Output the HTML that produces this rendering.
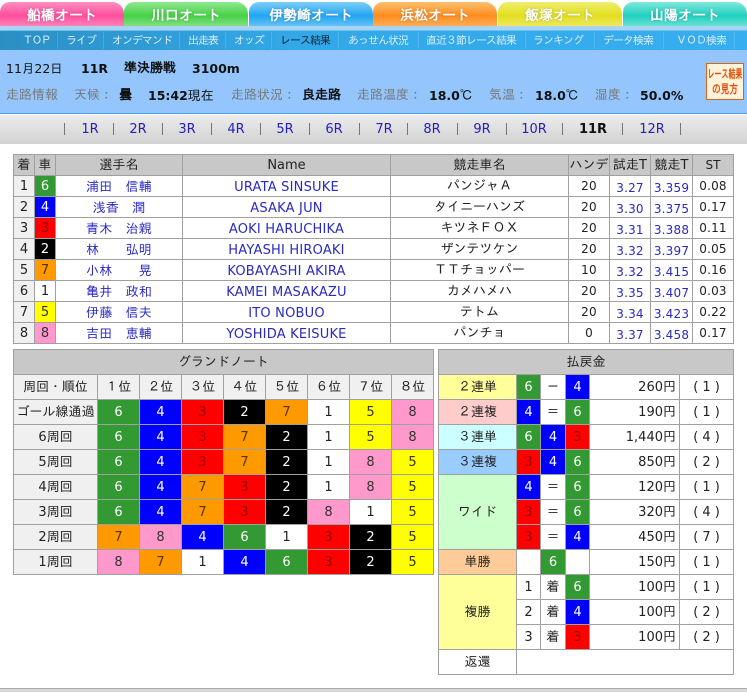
<!DOCTYPE html>
<html lang="ja"><head><meta charset="utf-8"><title>レース結果</title>
<style>
*{box-sizing:border-box}
html,body{margin:0;padding:0;background:#fff}
body{width:747px;height:692px;position:relative;overflow:hidden;font-family:"DejaVu Sans","IPAGothic","Noto Sans CJK JP",sans-serif;font-size:13px;color:#222}
.a{position:absolute;white-space:nowrap}
.tab{position:absolute;top:2px;height:25px;width:124px;border-radius:10px 12px 0 0;text-align:center;color:#fff;font-weight:bold;font-size:14px;line-height:28px;text-shadow:0 0 2px rgba(0,0,0,.25)}
#nav{position:absolute;left:0;top:30px;width:747px;height:20px;background:linear-gradient(90deg,#2c8fc4,#33a8e8 40%,#36aef0);border-top:1px solid #6fc0ee}
#nav span{position:absolute;top:2px;transform:translateX(-50%);font-size:11px;line-height:16px;color:#d8eefc;white-space:nowrap;letter-spacing:-1px}
#nav i{position:absolute;top:1px;width:1px;height:17px;background:rgba(255,255,255,.14)}
#info{position:absolute;left:0;top:50px;width:747px;height:64px;background:#94c6fd;border-bottom:1px solid #4d9be6}
#bar{position:absolute;left:0;top:115px;width:747px;height:29px;background:linear-gradient(#ececec,#d2d2d2)}
#bar span{position:absolute;top:7px;transform:translateX(-50%);font-size:13px;line-height:16px;color:#2222bb}
#bar i{position:absolute;top:8px;width:1px;height:12px;background:#777}
table{position:absolute;border-collapse:collapse;table-layout:fixed;font-size:13px}
td,th{border:1px solid #a0a0a0;padding:0;text-align:center;font-weight:normal;overflow:hidden;white-space:nowrap}
th{background:#c8c8c8}
.g{background:#f0f0f0}
.b{color:#2a2ac0;padding-top:3px;letter-spacing:.2px}
.n{font-size:12px;letter-spacing:.2px}
.c1{background:#fff;color:#222}.c2{background:#000;color:#fff}.c3{background:#f00;color:#900}.c4{background:#00f;color:#fff}.c5{background:#ff0;color:#333}.c6{background:#393;color:#fff}.c7{background:#f90;color:#553300}.c8{background:#f9c;color:#333}
#t1 tr{height:21px}
#t2 tr,#t3 tr{height:25px}
.r{text-align:right;padding-right:3px}
.d{font-family:"IPAGothic",sans-serif;font-weight:normal}
.l1{top:61px;font-size:12.5px;color:#111}
.l2{top:88px;color:#777}
.k{color:#111;font-weight:bold;font-size:12.5px}
.sq{display:block;transform-origin:center}
</style></head><body>
<div class="tab" style="left:0;background:linear-gradient(#ff8fc0,#ff4f9e 55%,#ff86bb)">船橋オート</div>
<div class="tab" style="left:124px;background:linear-gradient(#8fe88f,#46d246 55%,#88e088)">川口オート</div>
<div class="tab" style="left:249px;background:linear-gradient(#7fcdf8,#22a6f2 55%,#6cc4f6)">伊勢崎オート</div>
<div class="tab" style="left:373px;background:linear-gradient(#ffc070,#ff8c1e 55%,#ffb060)">浜松オート</div>
<div class="tab" style="left:498px;background:linear-gradient(#f0ee70,#e2de1e 55%,#eeea66)">飯塚オート</div>
<div class="tab" style="left:623px;background:linear-gradient(#80e8dc,#1fd0c0 55%,#70e2d6)">山陽オート</div>
<div class="a" style="left:0;top:26px;width:747px;height:4px;background:#a8d4f4"></div>
<div id="nav">
<i style="left:57px"></i><i style="left:103px"></i><i style="left:179px"></i><i style="left:225px"></i><i style="left:271px"></i><i style="left:338px"></i><i style="left:418px"></i><i style="left:525px"></i><i style="left:594px"></i><i style="left:663px"></i><i style="left:734px"></i>
<span style="left:36px;letter-spacing:-2px">ＴＯＰ</span><span style="left:81px">ライブ</span><span style="left:142px">オンデマンド</span><span style="left:203px">出走表</span><span style="left:249px">オッズ</span><span style="left:305px;color:#112233">レース結果</span><span style="left:378px">あっせん状況</span><span style="left:471px">直近３節レース結果</span><span style="left:558px">ランキング</span><span style="left:628px">データ検索</span><span style="left:701px">ＶＯＤ検索</span></div>
<div id="info"></div>
<div class="a l1" style="left:6px">11月22日</div>
<div class="a l1" style="left:81px;font-weight:bold">11R</div>
<div class="a l1" style="left:124px;font-weight:bold;font-size:13px">準決勝戦</div>
<div class="a l1" style="left:192px;font-weight:bold">3100m</div>
<div class="a l2" style="left:6px">走路情報</div>
<div class="a l2" style="left:74px">天候：</div>
<div class="a l2 k" style="left:119px;font-size:13px">曇</div>
<div class="a l2" style="left:148px;color:#111"><b style="font-size:12.5px">15:42</b>現在</div>
<div class="a l2" style="left:231px">走路状況：</div>
<div class="a l2 k" style="left:302px;font-size:13px">良走路</div>
<div class="a l2" style="left:357px">走路温度：</div>
<div class="a l2 k" style="left:429px">18.0<span class="d" style="font-size:13px">℃</span></div>
<div class="a l2" style="left:489px">気温：</div>
<div class="a l2 k" style="left:535px">18.0<span class="d" style="font-size:13px">℃</span></div>
<div class="a l2" style="left:595px">湿度：</div>
<div class="a l2 k" style="left:640px">50.0%</div>
<div class="a" style="left:706px;top:63px;width:38px;height:37px;background:#fff3dc;border:1px solid #d8641a;color:#e0500a;font-weight:bold;font-size:12px;line-height:15px;text-align:center;padding-top:3px;overflow:hidden">
<span class="sq" style="width:60px;margin-left:-12px;transform:scaleX(.58)">レース結果</span><span class="sq" style="transform:scaleX(.72);font-size:12px">の見方</span></div>
<div id="bar">
<i style="left:64px"></i><span style="left:90px">1R</span><i style="left:113px"></i><span style="left:138px">2R</span><i style="left:162px"></i><span style="left:187px">3R</span><i style="left:211px"></i><span style="left:236px">4R</span><i style="left:260px"></i><span style="left:285px">5R</span><i style="left:309px"></i><span style="left:334px">6R</span><i style="left:359px"></i><span style="left:384px">7R</span><i style="left:407px"></i><span style="left:432px">8R</span><i style="left:457px"></i><span style="left:482px">9R</span><i style="left:506px"></i><span style="left:534px">10R</span><i style="left:562px"></i><span style="left:593px;font-weight:bold;color:#111">11R</span><i style="left:622px"></i><span style="left:652px">12R</span><i style="left:680px"></i>
</div>

<table id="t1" style="left:13px;top:154px;width:720px">
<colgroup><col style="width:21px"><col style="width:21px"><col style="width:127px"><col style="width:208px"><col style="width:178px"><col style="width:41px"><col style="width:41px"><col style="width:42px"><col style="width:41px"></colgroup>
<tr><th>着</th><th>車</th><th>選手名</th><th>Name</th><th>競走車名</th><th>ハンデ</th><th>試走T</th><th>競走T</th><th style="font-size:12px">ST</th></tr>
<tr><td class="g">1</td><td class="c6">6</td><td class="b">浦田　信輔</td><td class="b">URATA SINSUKE</td><td>パンジャＡ</td><td class="n">20</td><td class="b n">3.27</td><td class="b n">3.359</td><td class="n">0.08</td></tr>
<tr><td class="g">2</td><td class="c4">4</td><td class="b">浅香　潤</td><td class="b">ASAKA JUN</td><td>タイニーハンズ</td><td class="n">20</td><td class="b n">3.30</td><td class="b n">3.375</td><td class="n">0.17</td></tr>
<tr><td class="g">3</td><td class="c3">3</td><td class="b">青木　治親</td><td class="b">AOKI HARUCHIKA</td><td>キツネＦＯＸ</td><td class="n">20</td><td class="b n">3.31</td><td class="b n">3.388</td><td class="n">0.11</td></tr>
<tr><td class="g">4</td><td class="c2">2</td><td class="b">林　　弘明</td><td class="b">HAYASHI HIROAKI</td><td>ザンテツケン</td><td class="n">20</td><td class="b n">3.32</td><td class="b n">3.397</td><td class="n">0.05</td></tr>
<tr><td class="g">5</td><td class="c7">7</td><td class="b">小林　　晃</td><td class="b">KOBAYASHI AKIRA</td><td>ＴＴチョッパー</td><td class="n">10</td><td class="b n">3.32</td><td class="b n">3.415</td><td class="n">0.16</td></tr>
<tr><td class="g">6</td><td class="c1">1</td><td class="b">亀井　政和</td><td class="b">KAMEI MASAKAZU</td><td>カメハメハ</td><td class="n">20</td><td class="b n">3.35</td><td class="b n">3.407</td><td class="n">0.03</td></tr>
<tr><td class="g">7</td><td class="c5">5</td><td class="b">伊藤　信夫</td><td class="b">ITO NOBUO</td><td>テトム</td><td class="n">20</td><td class="b n">3.34</td><td class="b n">3.423</td><td class="n">0.22</td></tr>
<tr><td class="g">8</td><td class="c8">8</td><td class="b">吉田　恵輔</td><td class="b">YOSHIDA KEISUKE</td><td>パンチョ</td><td class="n">0</td><td class="b n">3.37</td><td class="b n">3.458</td><td class="n">0.17</td></tr>
</table>

<table id="t2" style="left:13px;top:349px;width:420px">
<colgroup><col style="width:84px"><col style="width:42px"><col style="width:42px"><col style="width:42px"><col style="width:42px"><col style="width:42px"><col style="width:42px"><col style="width:42px"><col style="width:42px"></colgroup>
<tr><th colspan="9">グランドノート</th></tr>
<tr><td class="g">周回・順位</td><td class="g">１位</td><td class="g">２位</td><td class="g">３位</td><td class="g">４位</td><td class="g">５位</td><td class="g">６位</td><td class="g">７位</td><td class="g">８位</td></tr>
<tr><td class="g">ゴール線通過</td><td class="c6">6</td><td class="c4">4</td><td class="c3">3</td><td class="c2">2</td><td class="c7">7</td><td class="c1">1</td><td class="c5">5</td><td class="c8">8</td></tr>
<tr><td class="g">6周回</td><td class="c6">6</td><td class="c4">4</td><td class="c3">3</td><td class="c7">7</td><td class="c2">2</td><td class="c1">1</td><td class="c5">5</td><td class="c8">8</td></tr>
<tr><td class="g">5周回</td><td class="c6">6</td><td class="c4">4</td><td class="c3">3</td><td class="c7">7</td><td class="c2">2</td><td class="c1">1</td><td class="c8">8</td><td class="c5">5</td></tr>
<tr><td class="g">4周回</td><td class="c6">6</td><td class="c4">4</td><td class="c7">7</td><td class="c3">3</td><td class="c2">2</td><td class="c1">1</td><td class="c8">8</td><td class="c5">5</td></tr>
<tr><td class="g">3周回</td><td class="c6">6</td><td class="c4">4</td><td class="c7">7</td><td class="c3">3</td><td class="c2">2</td><td class="c8">8</td><td class="c1">1</td><td class="c5">5</td></tr>
<tr><td class="g">2周回</td><td class="c7">7</td><td class="c8">8</td><td class="c4">4</td><td class="c6">6</td><td class="c1">1</td><td class="c3">3</td><td class="c2">2</td><td class="c5">5</td></tr>
<tr><td class="g">1周回</td><td class="c8">8</td><td class="c7">7</td><td class="c1">1</td><td class="c4">4</td><td class="c6">6</td><td class="c3">3</td><td class="c2">2</td><td class="c5">5</td></tr>
</table>

<table id="t3" style="left:438px;top:349px;width:295px">
<colgroup><col style="width:78px"><col style="width:24px"><col style="width:25px"><col style="width:24px"><col style="width:90px"><col style="width:54px"></colgroup>
<tr><th colspan="6">払戻金</th></tr>
<tr><td style="background:#ffff99">２連単</td><td class="c6">6</td><td>－</td><td class="c4">4</td><td class="r">260円</td><td>( 1 )</td></tr>
<tr><td style="background:#ffcccc">２連複</td><td class="c4">4</td><td>＝</td><td class="c6">6</td><td class="r">190円</td><td>( 1 )</td></tr>
<tr><td style="background:#ccffff">３連単</td><td class="c6">6</td><td class="c4">4</td><td class="c3">3</td><td class="r">1,440円</td><td>( 4 )</td></tr>
<tr><td style="background:#99ccff">３連複</td><td class="c3">3</td><td class="c4">4</td><td class="c6">6</td><td class="r">850円</td><td>( 2 )</td></tr>
<tr><td rowspan="3" style="background:#ccffcc">ワイド</td><td class="c4">4</td><td>＝</td><td class="c6">6</td><td class="r">120円</td><td>( 1 )</td></tr>
<tr><td class="c3">3</td><td>＝</td><td class="c6">6</td><td class="r">320円</td><td>( 4 )</td></tr>
<tr><td class="c3">3</td><td>＝</td><td class="c4">4</td><td class="r">450円</td><td>( 7 )</td></tr>
<tr><td style="background:#ffcc99">単勝</td><td></td><td class="c6">6</td><td></td><td class="r">150円</td><td>( 1 )</td></tr>
<tr><td rowspan="3" style="background:#ffff99">複勝</td><td>1</td><td>着</td><td class="c6">6</td><td class="r">100円</td><td>( 1 )</td></tr>
<tr><td>2</td><td>着</td><td class="c4">4</td><td class="r">100円</td><td>( 2 )</td></tr>
<tr><td>3</td><td>着</td><td class="c3">3</td><td class="r">100円</td><td>( 2 )</td></tr>
<tr><td>返還</td><td colspan="5"></td></tr>
</table>
<div class="a" style="left:0;top:688px;width:747px;height:4px;background:#d8d8d8;border-top:1px solid #aaa"></div>
</body></html>
